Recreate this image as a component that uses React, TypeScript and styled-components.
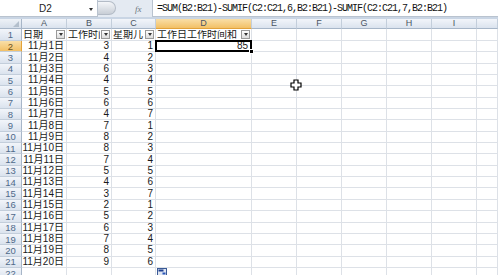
import React from "react";
import styled, { createGlobalStyle, css } from "styled-components";

const GlobalStyle = createGlobalStyle`
  *, *::before, *::after {
    box-sizing: border-box;
  }
  html, body {
    margin: 0;
    padding: 0;
    background: #ffffff;
  }
  body {
    width: 498px;
    height: 275px;
    overflow: hidden;
    font-family: "Liberation Sans", "Noto Sans CJK SC", sans-serif;
  }
`;

const Sheet = styled.div`
  position: relative;
  width: 498px;
  height: 275px;
  overflow: hidden;
  background: #ffffff;
`;

const FormulaBar = styled.div`
  display: flex;
  align-items: stretch;
  height: 19px;
  background: #e4eaf2;
  border-bottom: 2px solid #c9d5e4;
`;

const NameBox = styled.div`
  width: 98px;
  display: flex;
  align-items: center;
  background: #ffffff;
  border-right: 1px solid #b9c3cf;
  border-bottom: 1px solid #b9c3cf;
  font-size: 10px;
  color: #222;
`;

const NameText = styled.span`
  flex: 1;
  text-align: center;
  padding-left: 4px;
`;

const DropArrow = styled.span`
  width: 0;
  height: 0;
  margin: 2px 4px 0 2px;
  border-left: 2.5px solid transparent;
  border-right: 2.5px solid transparent;
  border-top: 3px solid #333;
`;

const Splitter = styled.div`
  width: 18px;
  height: 14px;
  margin-top: 1px;
  border-radius: 0 8px 8px 0;
  background: linear-gradient(#f4f6f9, #c8ced6);
  border: 1px solid #b3bbc6;
  border-left: none;
`;

const FxButton = styled.div`
  width: 36px;
  display: flex;
  align-items: center;
  padding-left: 19px;
  font-family: "Liberation Serif", serif;
  font-style: italic;
  font-size: 9px;
  color: #6d7680;
`;

const FormulaInput = styled.div`
  flex: 1;
  display: flex;
  align-items: center;
  padding-left: 4px;
  background: #ffffff;
  border-left: 1px solid #b9c3cf;
  border-bottom: 1px solid #b9c3cf;
  font-family: "Liberation Mono", monospace;
  font-size: 10px;
  letter-spacing: -1px;
  color: #111;
  white-space: nowrap;
`;

const Grid = styled.div`
  display: grid;
  grid-template-columns: 22px 45px 45px 44px 96px 45px 45px 45px 45px 45px 21px;
  grid-template-rows: 10px 12px repeat(21, 11.35px);
`;

const headerFill = css<{ $active?: boolean }>`
  background: ${(p) =>
    p.$active
      ? "linear-gradient(#f9dfa8, #f2c066)"
      : "linear-gradient(#f2f5fa, #dbe3ee)"};
  color: #4a5563;
  font-size: 9px;
  display: flex;
  align-items: center;
`;

const Corner = styled.div`
  position: relative;
  background: linear-gradient(#eef2f7, #d6dfea);
  border-right: 1px solid #a7b6c8;
  border-bottom: 1px solid #a7b6c8;

  &::after {
    content: "";
    position: absolute;
    right: 2px;
    bottom: 1px;
    border-left: 6px solid transparent;
    border-bottom: 6px solid #b3bfcc;
  }
`;

const ColHead = styled.div<{ $active?: boolean }>`
  ${headerFill};
  justify-content: center;
  border-right: 1px solid #c3cedb;
  border-bottom: 1px solid ${(p) => (p.$active ? "#e2a23a" : "#a7b6c8")};
  line-height: 9px;
`;

const RowHead = styled.div<{ $active?: boolean }>`
  ${headerFill};
  justify-content: center;
  border-right: 1px solid ${(p) => (p.$active ? "#e2a23a" : "#a7b6c8")};
  border-bottom: 1px solid #c3cedb;
  font-size: 9.5px;
  color: ${(p) => (p.$active ? "#6a5320" : "#4f6a8a")};
`;

const Cell = styled.div<{ $align?: "left" | "right" }>`
  display: flex;
  align-items: center;
  justify-content: ${(p) => (p.$align === "right" ? "flex-end" : "flex-start")};
  padding: 0 2px 0 1px;
  border-right: 1px solid #dde1e7;
  border-bottom: 1px solid #dde1e7;
  font-size: 10px;
  line-height: 10px;
  color: #1a1a1a;
  white-space: nowrap;
  overflow: hidden;
  min-width: 0;
`;

const ActiveCell = styled(Cell)`
  position: relative;
  overflow: visible;
  padding-right: 3px;

  &::after {
    content: "";
    position: absolute;
    left: -1px;
    top: -1px;
    right: -1px;
    bottom: -1px;
    border: 2px solid #000;
    pointer-events: none;
  }
  &::before {
    content: "";
    position: absolute;
    right: -3px;
    bottom: -3px;
    width: 5px;
    height: 5px;
    background: #000;
    border: 1px solid #fff;
    z-index: 2;
  }
`;

const FilterCell = styled(Cell)`
  padding-right: 1px;
  gap: 1px;
`;

const FilterText = styled.span`
  flex: 1;
  min-width: 0;
  overflow: hidden;
`;

const FilterButton = styled.span`
  flex: none;
  width: 9px;
  height: 9px;
  display: flex;
  align-items: center;
  justify-content: center;
  border: 1px solid #9a9a9a;
  background: linear-gradient(#ffffff, #dcdcdc);

  &::after {
    content: "";
    border-left: 2.5px solid transparent;
    border-right: 2.5px solid transparent;
    border-top: 3px solid #333;
  }
`;

const Cursor = styled.svg`
  position: absolute;
  left: 290px;
  top: 79px;
`;

const PasteIcon = styled.svg`
  position: absolute;
  left: 157px;
  top: 268px;
`;

const columns = ["A", "B", "C", "D", "E", "F", "G", "H", "I", ""];
const hours = [3, 4, 6, 4, 5, 6, 4, 7, 8, 8, 7, 5, 4, 3, 2, 5, 6, 7, 8, 9];
const weekdays = [1, 2, 3, 4, 5, 6, 7, 1, 2, 3, 4, 5, 6, 7, 1, 2, 3, 4, 5, 6];
const headers = ["日期", "工作时间", "星期几", "工作日工作时间和"];

const Empty: React.FC<{ count: number }> = ({ count }) => (
  <>
    {Array.from({ length: count }).map((_, i) => (
      <Cell key={i} />
    ))}
  </>
);

const App: React.FC = () => {
  return (
    <Sheet>
      <GlobalStyle />
      <FormulaBar>
        <NameBox>
          <NameText>D2</NameText>
          <DropArrow />
        </NameBox>
        <Splitter />
        <FxButton>fx</FxButton>
        <FormulaInput>=SUM(B2:B21)-SUMIF(C2:C21,6,B2:B21)-SUMIF(C2:C21,7,B2:B21)</FormulaInput>
      </FormulaBar>
      <Grid>
        <Corner />
        {columns.map((c) => (
          <ColHead key={c || "end"} $active={c === "D"}>
            {c}
          </ColHead>
        ))}

        <RowHead>1</RowHead>
        {headers.map((h) => (
          <FilterCell key={h}>
            <FilterText>{h}</FilterText>
            <FilterButton />
          </FilterCell>
        ))}
        <Empty count={6} />

        {hours.map((h, i) => (
          <React.Fragment key={i}>
            <RowHead $active={i === 0}>{i + 2}</RowHead>
            <Cell $align="right">{`11月${i + 1}日`}</Cell>
            <Cell $align="right">{h}</Cell>
            <Cell $align="right">{weekdays[i]}</Cell>
            {i === 0 ? <ActiveCell $align="right">85</ActiveCell> : <Cell />}
            <Empty count={6} />
          </React.Fragment>
        ))}

        <RowHead>22</RowHead>
        <Empty count={10} />
      </Grid>

      <Cursor width="12" height="12" viewBox="0 0 12 12">
        <path
          d="M4 1h4v3h3v4H8v3H4V8H1V4h3z"
          fill="#fff"
          stroke="#000"
          strokeWidth="1.2"
        />
      </Cursor>
      <PasteIcon width="10" height="8" viewBox="0 0 10 8">
        <rect x="0.5" y="0.5" width="9" height="7" fill="#dfe6f2" stroke="#3a5a96" />
        <rect x="1.5" y="1.5" width="5" height="2" fill="#1f3f8f" />
        <rect x="5.5" y="4.5" width="3" height="2" fill="#2b56b8" />
      </PasteIcon>
    </Sheet>
  );
};

export default App;
